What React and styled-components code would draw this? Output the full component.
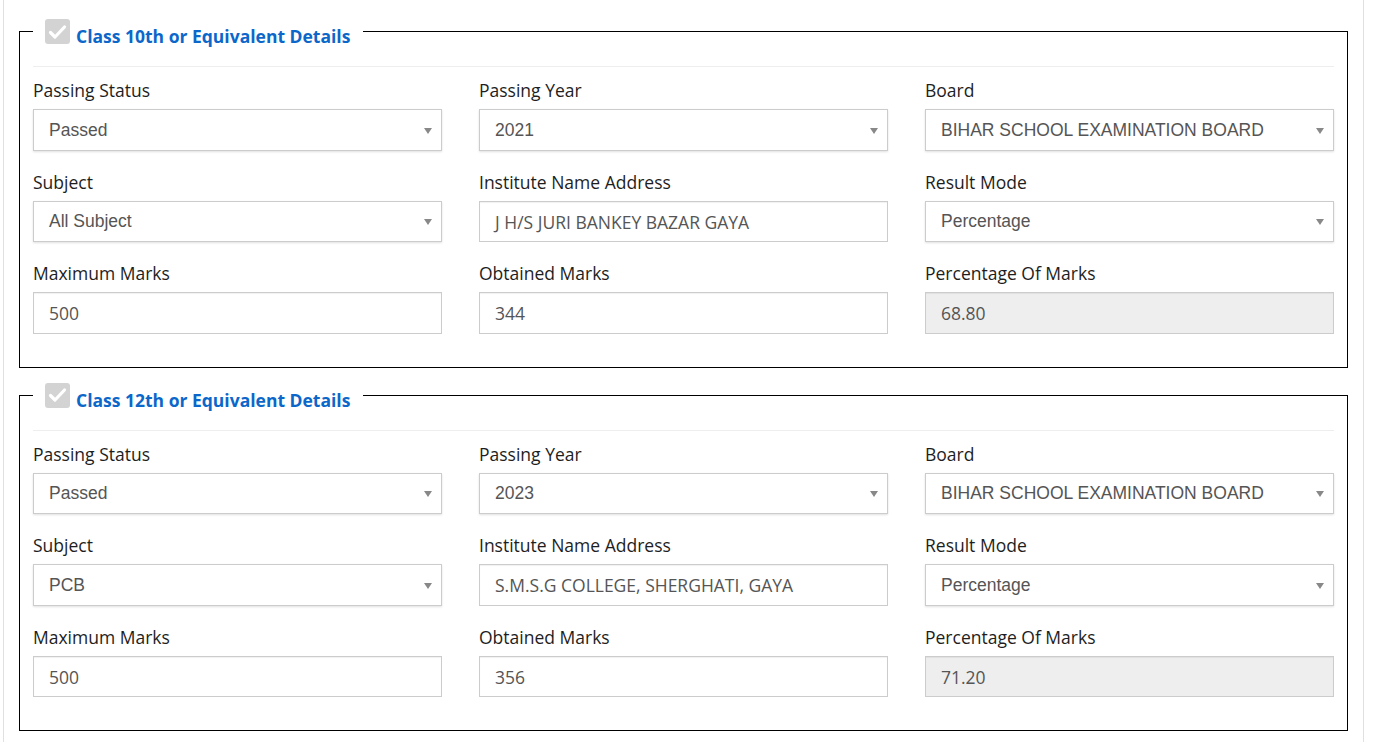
import React from "react";
import styled, { createGlobalStyle } from "styled-components";

const Global = createGlobalStyle`
  html, body { margin: 0; padding: 0; background: #fff; }
  body { font-family: "Open Sans", "Liberation Sans", sans-serif; font-size: 17.5px; color: #222; }
  * { box-sizing: border-box; }
`;

const Panel = styled.div`
  margin-left: 3px;
  width: 1361px;
  border-left: 1px solid #e0e0e0;
  border-right: 1px solid #e0e0e0;
  padding: 19px 15px 10px;
`;

const Fieldset = styled.fieldset`
  margin: 0 0 15px;
  border: 1px solid #000;
  padding: 0 13px 14px;
  min-width: 0;
`;

const Legend = styled.legend`
  display: flex;
  align-items: flex-start;
  gap: 6px;
  padding: 0 13px 0 12px;
  margin: 0;
  height: 25px;
`;

const Check = styled.span`
  width: 25px;
  height: 25px;
  border-radius: 3px;
  background: #d3d3d3;
  display: flex;
  align-items: center;
  justify-content: center;
  flex: none;
`;

const LegendText = styled.span`
  font-family: "Open Sans", sans-serif;
  font-weight: 700;
  font-size: 17.5px;
  color: #0b67c9;
  line-height: 25px;
  margin-top: 5px;
`;

const Rule = styled.hr`
  border: 0;
  border-top: 1px solid #eee;
  margin: 22px 0 11px;
`;

const Grid = styled.div`
  display: grid;
  grid-template-columns: repeat(3, 1fr);
  column-gap: 37px;
`;

const Group = styled.div`
  margin-bottom: 18.75px;
`;

const Label = styled.div`
  font-family: "Open Sans", sans-serif;
  font-size: 17.5px;
  line-height: 25px;
  color: #1e1e1e;
  margin-bottom: 6.25px;
`;

const Field = styled.div`
  height: 41.5px;
  border: 1px solid #ccc;
  background: ${(p) => (p.$disabled ? "#eee" : "#fff")};
  display: flex;
  align-items: center;
  justify-content: space-between;
  padding: 0 9px 0 15px;
  color: #555;
  font-family: ${(p) => (p.$select ? '"Liberation Sans", Arial, sans-serif' : '"Open Sans", sans-serif')};
  font-size: 17.5px;
  box-shadow: ${(p) =>
    p.$select ? "0 1px 2px rgba(0,0,0,0.12)" : "inset 0 1px 1px rgba(0,0,0,0.06)"};
`;

const Caret = styled.span`
  width: 0;
  height: 0;
  border-left: 4.5px solid transparent;
  border-right: 4.5px solid transparent;
  border-top: 6px solid #888;
  margin-top: 1px;
`;

const CheckIcon = () => (
  <svg width="19" height="16" viewBox="0 0 19 16">
    <path d="M2.5 8.5 L7 13 L16.5 3" fill="none" stroke="#fff" strokeWidth="3.2" strokeLinecap="round" strokeLinejoin="round" />
  </svg>
);

const Input = ({ label, value, select, disabled }) => (
  <Group>
    <Label>{label}</Label>
    <Field $select={select} $disabled={disabled}>
      <span>{value}</span>
      {select && <Caret />}
    </Field>
  </Group>
);

const sections = [
  {
    title: "Class 10th or Equivalent Details",
    fields: [
      ["Passing Status", "Passed", true],
      ["Passing Year", "2021", true],
      ["Board", "BIHAR SCHOOL EXAMINATION BOARD", true],
      ["Subject", "All Subject", true],
      ["Institute Name Address", "J H/S JURI BANKEY BAZAR GAYA", false],
      ["Result Mode", "Percentage", true],
      ["Maximum Marks", "500", false],
      ["Obtained Marks", "344", false],
      ["Percentage Of Marks", "68.80", false, true],
    ],
  },
  {
    title: "Class 12th or Equivalent Details",
    fields: [
      ["Passing Status", "Passed", true],
      ["Passing Year", "2023", true],
      ["Board", "BIHAR SCHOOL EXAMINATION BOARD", true],
      ["Subject", "PCB", true],
      ["Institute Name Address", "S.M.S.G COLLEGE, SHERGHATI, GAYA", false],
      ["Result Mode", "Percentage", true],
      ["Maximum Marks", "500", false],
      ["Obtained Marks", "356", false],
      ["Percentage Of Marks", "71.20", false, true],
    ],
  },
];

export default function App() {
  return (
    <>
      <Global />
      <Panel>
        {sections.map((s) => (
          <Fieldset key={s.title}>
            <Legend>
              <Check>
                <CheckIcon />
              </Check>
              <LegendText>{s.title}</LegendText>
            </Legend>
            <Rule />
            <Grid>
              {s.fields.map(([label, value, select, disabled]) => (
                <Input key={label} label={label} value={value} select={select} disabled={disabled} />
              ))}
            </Grid>
          </Fieldset>
        ))}
      </Panel>
    </>
  );
}
